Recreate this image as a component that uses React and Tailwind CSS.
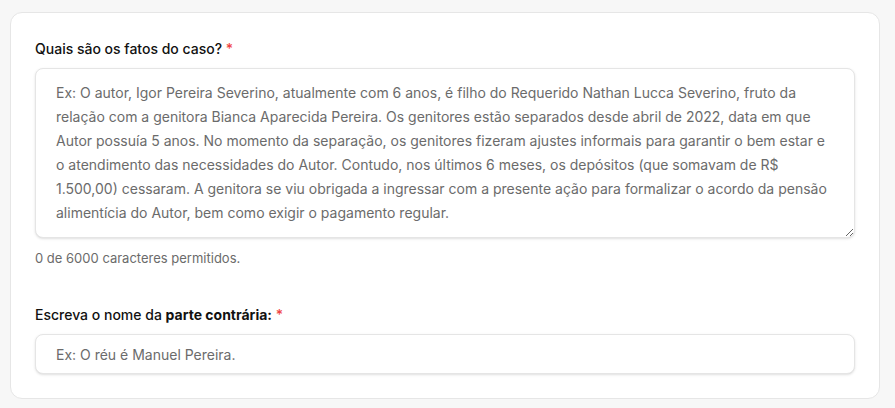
import React, { useState } from "react";

const font = { fontFamily: "Inter, 'Noto Sans', sans-serif" };

export default function App() {
  const [fatos, setFatos] = useState("");
  const [parte, setParte] = useState("");

  return (
    <div className="min-h-screen bg-[#f7f7f7] pt-3 pl-2.5 pr-[15px]" style={font}>
      <div className="rounded-xl border border-[#e6e6e6] bg-white p-6">
        {/* Fatos do caso */}
        <label className="mb-[7px] block text-sm font-medium leading-6 text-[#111111]">
          Quais são os fatos do caso? <span className="text-[#ef4444]">*</span>
        </label>
        <textarea
          rows={6}
          value={fatos}
          onChange={(e) => setFatos(e.target.value)}
          maxLength={6000}
          placeholder="Ex: O autor, Igor Pereira Severino, atualmente com 6 anos, é filho do Requerido Nathan Lucca Severino, fruto da relação com a genitora Bianca Aparecida Pereira. Os genitores estão separados desde abril de 2022, data em que Autor possuía 5 anos. No momento da separação, os genitores fizeram ajustes informais para garantir o bem estar e o atendimento das necessidades do Autor. Contudo, nos últimos 6 meses, os depósitos (que somavam de R$ 1.500,00) cessaram. A genitora se viu obrigada a ingressar com a presente ação para formalizar o acordo da pensão alimentícia do Autor, bem como exigir o pagamento regular."
          className="block h-[170px] w-full rounded-lg border border-[#e5e5e5] bg-white px-5 py-3 text-sm leading-6 text-[#111111] shadow-sm outline-none placeholder:text-[#6b6b6b]"
          style={font}
        />
        <p className="mt-[10px] text-[13px] leading-5 text-[#6b6b6b]">
          {fatos.length} de 6000 caracteres permitidos.
        </p>

        {/* Parte contraria */}
        <label className="mt-[35px] mb-[7px] block text-sm font-medium leading-6 text-[#111111]">
          Escreva o nome da <span className="font-bold">parte contrária:</span>{" "}
          <span className="text-[#ef4444]">*</span>
        </label>
        <input
          type="text"
          value={parte}
          onChange={(e) => setParte(e.target.value)}
          placeholder="Ex: O réu é Manuel Pereira."
          className="block h-10 w-full rounded-lg border border-[#e5e5e5] bg-white px-5 text-sm text-[#111111] shadow-sm outline-none placeholder:text-[#6b6b6b]"
          style={font}
        />
      </div>
    </div>
  );
}
